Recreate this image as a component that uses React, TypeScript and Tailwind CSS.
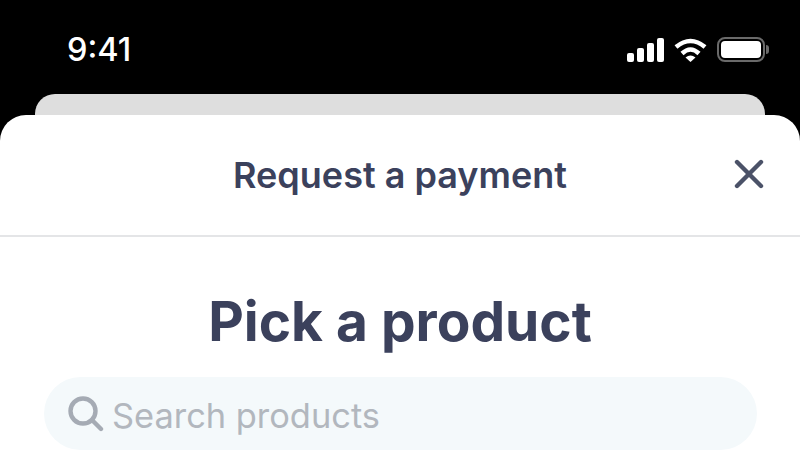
import { X } from 'lucide-react';

function StatusIcons() {
  return (
    <div className="flex items-center gap-[10px]">
      <svg width="37" height="24" viewBox="0 0 37 24" fill="white">
        <rect x="0" y="15" width="7" height="9" rx="2" />
        <rect x="10" y="10" width="7" height="14" rx="2" />
        <rect x="20" y="5" width="7" height="19" rx="2" />
        <rect x="30" y="0" width="7" height="24" rx="2" />
      </svg>
      <svg width="33" height="24" viewBox="0 0 33 24" fill="none" stroke="white" strokeWidth="4.5">
        <path d="M2 9 Q16.5 -3 31 9" />
        <path d="M8 15.5 Q16.5 7.5 25 15.5" />
        <path d="M16.5 24 L11.5 19.5 Q16.5 15.5 21.5 19.5 Z" fill="white" stroke="none" />
      </svg>
      <div className="flex items-center gap-[1px]">
        <div className="flex h-[25px] w-[48px] items-center justify-center rounded-[8px] border-2 border-[#6a6a6a]">
          <div className="h-[17px] w-[40px] rounded-[4px] bg-white" />
        </div>
        <div className="h-[9px] w-[3px] rounded-r-full bg-[#6a6a6a]" />
      </div>
    </div>
  );
}

export default function App() {
  return (
    <div className="flex h-[450px] w-[800px] flex-col overflow-hidden bg-black font-['Inter',sans-serif]">
      <div className="flex h-[94px] shrink-0 items-start justify-between pl-[67px] pr-[31px] pt-[31px]">
        <span className="text-[32.5px] font-medium leading-[38px] text-white">9:41</span>
        <div className="pt-[6px]">
          <StatusIcons />
        </div>
      </div>
      <div className="mx-[35px] h-[21px] shrink-0 rounded-t-[20px] bg-[#dedede]" />
      <div className="flex flex-1 flex-col rounded-t-[26px] bg-white">
        <div className="relative flex h-[122px] shrink-0 items-center justify-center border-b-2 border-[#e4e5e7]">
          <span className="text-[36px] font-semibold text-[#3b415c]">Request a payment</span>
          <X className="absolute right-[27px] top-[35px] text-[#4b5268]" size={48} strokeWidth={2.2} />
        </div>
        <h1 className="mt-[49px] text-center text-[55px] font-bold leading-[70px] text-[#3b415c]">Pick a product</h1>
        <div className="ml-[44px] mr-[43px] mt-[21px] flex h-[73px] shrink-0 items-start gap-[8px] rounded-[37px] bg-[#f4f9fb] pl-[24px] pt-[19px]">
          <svg width="36" height="36" viewBox="0 0 36 36" fill="none" stroke="#a5abb4" strokeWidth="4.4" strokeLinecap="round">
            <circle cx="15" cy="15" r="12.5" />
            <path d="M24 24 L33 33" />
          </svg>
          <span className="text-[34.4px] leading-[40px] text-[#b2b7be]">Search products</span>
        </div>
      </div>
    </div>
  );
}
